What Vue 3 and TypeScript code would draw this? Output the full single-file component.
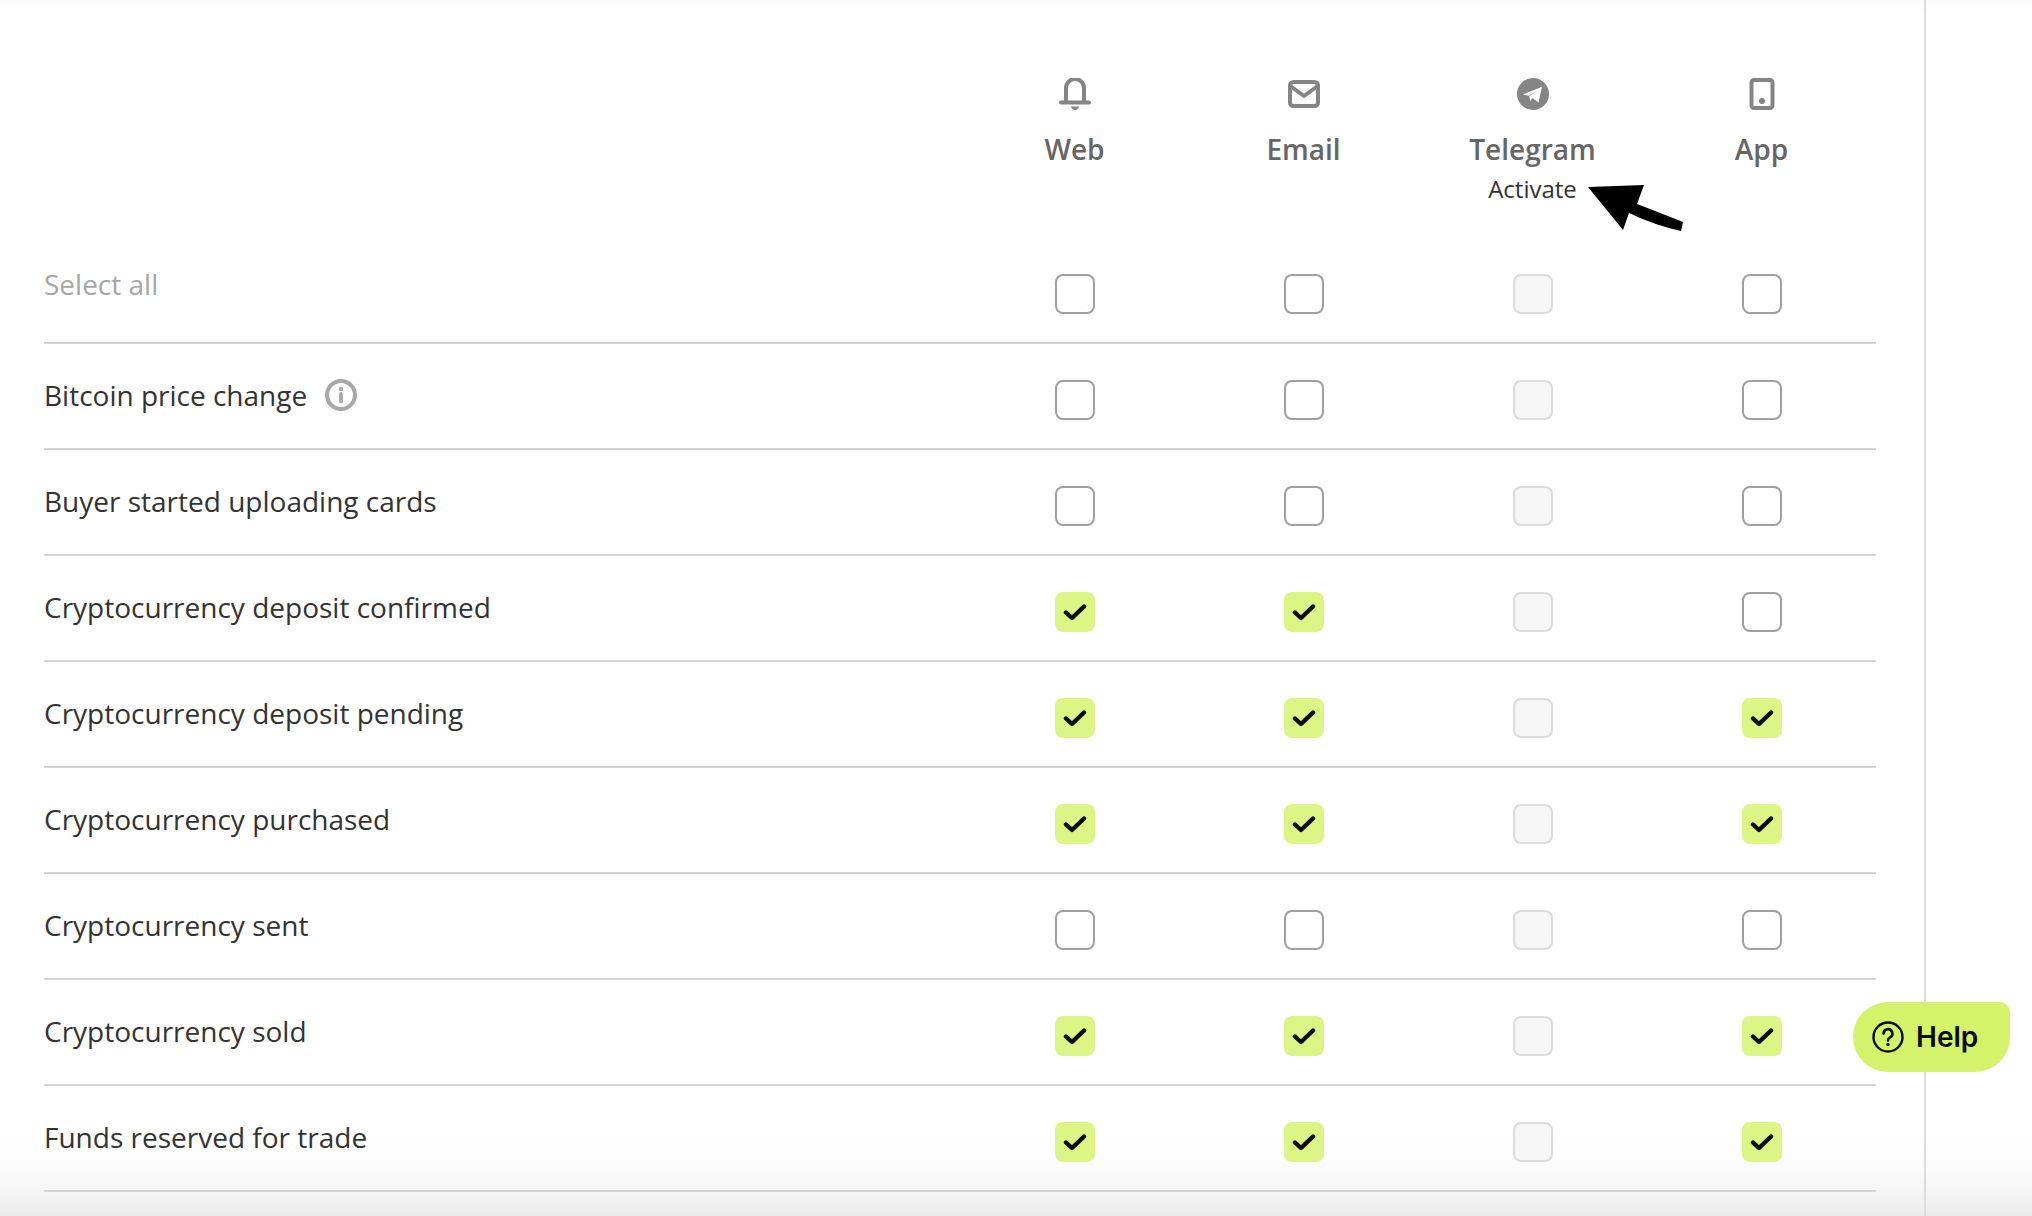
<script setup lang="ts">
const rows: { label: string; checks: boolean[]; info?: boolean; muted?: boolean }[] = [
  { label: 'Select all', checks: [false, false, false], muted: true },
  { label: 'Bitcoin price change', checks: [false, false, false], info: true },
  { label: 'Buyer started uploading cards', checks: [false, false, false] },
  { label: 'Cryptocurrency deposit confirmed', checks: [true, true, false] },
  { label: 'Cryptocurrency deposit pending', checks: [true, true, true] },
  { label: 'Cryptocurrency purchased', checks: [true, true, true] },
  { label: 'Cryptocurrency sent', checks: [false, false, false] },
  { label: 'Cryptocurrency sold', checks: [true, true, true] },
  { label: 'Funds reserved for trade', checks: [true, true, true] },
]
</script>

<template>
  <div class="page">
    <div class="panel">
      <div class="table">
        <div class="head">
          <div class="head-spacer"></div>
          <div class="col">
            <svg class="icon" width="32" height="32" viewBox="0 0 32 32" fill="none" stroke="#858585" stroke-width="4" stroke-linecap="round">
              <path d="M7 24V10a9 9 0 0 1 18 0v14" />
              <path d="M2 24.5h28" />
              <path d="M11.5 28.6h9l-1.6 2a3.6 3.6 0 0 1-5.8 0z" fill="#858585" stroke="none" />
            </svg>
            <div class="name">Web</div>
          </div>
          <div class="col">
            <svg class="icon" width="32" height="32" viewBox="0 0 32 32" fill="none" stroke="#858585" stroke-width="4">
              <rect x="2" y="4" width="28" height="24" rx="3.5" />
              <path d="M3 8.5l13 9.5 13-9.5" stroke-linejoin="round" />
            </svg>
            <div class="name">Email</div>
          </div>
          <div class="col">
            <svg class="icon" width="32" height="32" viewBox="0 0 32 32">
              <circle cx="16" cy="16" r="16" fill="#858585" />
              <path d="M5.8 16.5L25 8.8 21.5 24.5 15.6 20 13.4 23 12.2 18.6 19 13.4 12 17.8z" fill="#fff" />
            </svg>
            <div class="name">Telegram</div>
            <div class="activate">Activate</div>
          </div>
          <div class="col">
            <svg class="icon" width="32" height="32" viewBox="0 0 32 32" fill="none">
              <rect x="5.5" y="2" width="21" height="28" rx="2.5" stroke="#858585" stroke-width="4" />
              <circle cx="16" cy="23" r="3" fill="#858585" />
            </svg>
            <div class="name">App</div>
          </div>
        </div>

        <div v-for="row in rows" :key="row.label" class="row">
          <div class="label" :class="{ muted: row.muted }">
            <span>{{ row.label }}</span>
            <svg v-if="row.info" class="info" width="32" height="32" viewBox="0 0 32 32" fill="none">
              <circle cx="16" cy="16" r="14" stroke="#a8a8a8" stroke-width="4" />
              <circle cx="16" cy="10" r="2.2" fill="#a8a8a8" />
              <path d="M16 15v7.5" stroke="#a8a8a8" stroke-width="3.8" stroke-linecap="round" />
            </svg>
          </div>
          <div class="cell">
            <span class="box" :class="{ on: row.checks[0] }">
              <svg v-if="row.checks[0]" width="24" height="20" viewBox="0 0 24 20" fill="none"><path d="M3 10.5l6 5.5L21 4.5" stroke="#0a0a0a" stroke-width="4.4" stroke-linecap="round" stroke-linejoin="round" /></svg>
            </span>
          </div>
          <div class="cell">
            <span class="box" :class="{ on: row.checks[1] }">
              <svg v-if="row.checks[1]" width="24" height="20" viewBox="0 0 24 20" fill="none"><path d="M3 10.5l6 5.5L21 4.5" stroke="#0a0a0a" stroke-width="4.4" stroke-linecap="round" stroke-linejoin="round" /></svg>
            </span>
          </div>
          <div class="cell">
            <span class="box disabled"></span>
          </div>
          <div class="cell">
            <span class="box" :class="{ on: row.checks[2] }">
              <svg v-if="row.checks[2]" width="24" height="20" viewBox="0 0 24 20" fill="none"><path d="M3 10.5l6 5.5L21 4.5" stroke="#0a0a0a" stroke-width="4.4" stroke-linecap="round" stroke-linejoin="round" /></svg>
            </span>
          </div>
        </div>
      </div>
    </div>

    <svg class="arrow" width="100" height="50" viewBox="0 0 100 50">
      <path d="M0 2L56 0 49 19Q70 27 95 37L93 46Q66 40 41 28L35 45z" fill="#000" />
    </svg>

    <div class="help">
      <svg width="32" height="32" viewBox="0 0 32 32" fill="none">
        <circle cx="16" cy="16" r="14.5" stroke="#0a0a0a" stroke-width="2.4" />
        <path d="M11.6 12.6a4.4 4.4 0 1 1 6.6 3.8c-1.4.8-2.2 1.6-2.2 3" stroke="#0a0a0a" stroke-width="2.6" stroke-linecap="round" />
        <circle cx="16" cy="23.4" r="1.7" fill="#0a0a0a" />
      </svg>
      <span>Help</span>
    </div>
  </div>
</template>

<style>
html,
body {
  margin: 0;
  background: #fff;
  overflow: hidden;
}
</style>

<style scoped>
.page {
  position: relative;
  width: 2032px;
  height: 1216px;
  overflow: hidden;
  background:
    linear-gradient(to bottom, #fcfcfc 0, #fff 14px, #fff 1130px, #fbfbfb 1170px, #f5f5f5 1190px, #ececec 1216px);
  font-family: 'Open Sans', 'Liberation Sans', sans-serif;
  color: #333;
}

.panel {
  box-sizing: border-box;
  width: 1926px;
  height: 1216px;
  padding-left: 44px;
  border-right: 2px solid #dcdcdc;
}

.table {
  width: 1832px;
}

.head,
.row {
  display: grid;
  grid-template-columns: 916px repeat(4, 229px);
}

.head {
  height: 238px;
  padding-top: 78px;
  box-sizing: border-box;
}

.col {
  display: flex;
  flex-direction: column;
  align-items: center;
}

.icon {
  display: block;
}

.name {
  margin-top: 19px;
  font-size: 28px;
  line-height: 40px;
  font-weight: 600;
  color: #666;
}

.activate {
  font-size: 24px;
  line-height: 34px;
  margin-top: 3px;
  color: #333;
}

.row {
  box-sizing: border-box;
  height: 106px;
  border-bottom: 2px solid #d5d5d5;
  align-items: center;
}

.label {
  display: flex;
  align-items: center;
  gap: 18px;
  font-size: 28px;
  line-height: 40px;
  margin-bottom: 2px;
}

.label.muted {
  color: #a6a6a6;
  margin-bottom: 13px;
}

.cell {
  display: flex;
  justify-content: center;
  padding-top: 8px;
}

.box {
  box-sizing: border-box;
  width: 40px;
  height: 40px;
  border-radius: 8px;
  border: 2px solid #a0a0a0;
  background: #fff;
  display: flex;
  align-items: center;
  justify-content: center;
}

.box.disabled {
  border-color: #dcdcdc;
  background: #f6f6f6;
}

.box.on {
  border: none;
  background: #dcf584;
}

.arrow {
  position: absolute;
  left: 1588px;
  top: 185px;
}

.help {
  position: absolute;
  left: 1853px;
  top: 1002px;
  box-sizing: border-box;
  width: 157px;
  height: 70px;
  padding-left: 19px;
  display: flex;
  align-items: center;
  gap: 12px;
  background: #d4f36b;
  border-radius: 35px 10px 35px 35px;
  color: #0a0a0a;
  font-family: Inter, 'Liberation Sans', sans-serif;
  font-size: 28px;
  font-weight: 600;
}
</style>
